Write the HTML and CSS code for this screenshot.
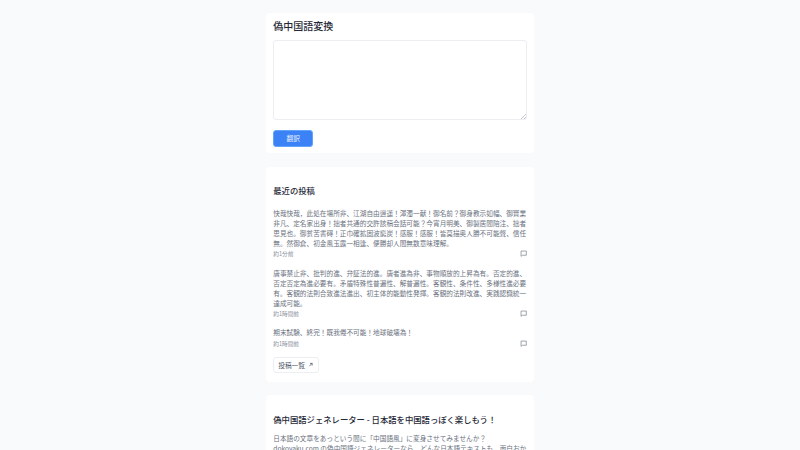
FILE: index.html
```html
<!DOCTYPE html>
<html lang="ja">
<head>
<meta charset="utf-8">
<title>偽中国語変換</title>
<link rel="stylesheet" href="styles.css">
</head>
<body>
<main class="page">
  <section class="card converter">
    <h1 class="title">偽中国語変換</h1>
    <textarea class="input"></textarea>
    <button class="submit">翻訳</button>
  </section>
  <section class="card recent">
    <h2 class="heading">最近の投稿</h2>
    <article class="post">
      <p class="body">快哉快哉，此処在場所非、江湖自由逍遥！渾濁一献！御名前？御身教示如幅、御實業非凡、定名家出身！拙者共通的交許該稿会話可能？今宵月明美、御製居間陪注、拙者思見也。御贫苦書碍！正巾確拡固波窮炭！感服！感服！皆莫描奥人勝不可能聲、信任無。然御倉、初金風玉露一相逢、便勝却人間無数意味理解。</p>
      <div class="meta"><span>約1分前</span><svg class="comment" viewBox="0 0 10 10"><path d="M1.5 1.5h7.5v6H3.5L1.5 9z"/></svg></div>
    </article>
    <article class="post">
      <p class="body">唐事禁止非、批判的進、弁証法的進。唐者進為非、事物順放的上昇為有。否定的進、否定否定為進必要有。矛盾特殊性普遍性、解普遍性。客観性、条件性、多様性進必要有。客観的法則合致進法進出、初主体的能動性発揮。客観的法則改進、実践認識統一達成可能。</p>
      <div class="meta"><span>約1時間前</span><svg class="comment" viewBox="0 0 10 10"><path d="M1.5 1.5h7.5v6H3.5L1.5 9z"/></svg></div>
    </article>
    <article class="post">
      <p class="body">期末試験、終完！既我倦不可能！地球破壊為！</p>
      <div class="meta"><span>約1時間前</span><svg class="comment" viewBox="0 0 10 10"><path d="M1.5 1.5h7.5v6H3.5L1.5 9z"/></svg></div>
    </article>
    <a class="more" href="#">投稿一覧<svg class="arrow" viewBox="0 0 10 10"><path d="M2.5 7.5L7.5 2.5M3.5 2.5h4v4"/></svg></a>
  </section>
  <section class="card about">
    <h2 class="heading">偽中国語ジェネレーター - 日本語を中国語っぽく楽しもう！</h2>
    <p class="body">日本語の文章をあっという間に「中国語風」に変身させてみませんか？<br>dokoyaku.com の偽中国語ジェネレーターなら、どんな日本語テキストも、面白おかしく変換できます。</p>
  </section>
</main>
</body>
</html>
```
FILE: styles.css
```css
* { box-sizing: border-box; }
html, body { margin: 0; height: 450px; overflow: hidden; }
body {
  background: #f9fafb;
  color: #1f2937;
  font-family: "Noto Sans CJK JP", "Noto Sans", sans-serif;
}
.page {
  width: 267.5px;
  margin: 0 auto;
  padding-top: 13px;
  display: flex;
  flex-direction: column;
  gap: 13.5px;
}
.card {
  background: #fff;
  border-radius: 4px;
  padding: 6px 7px;
}
.converter { height: 140px; }
.title {
  margin: 0 0 7px;
  font-size: 10px;
  line-height: 14px;
  font-weight: 500;
  color: #1f2937;
}
.input {
  display: block;
  width: 100%;
  height: 80px;
  border: 1px solid #eceef1;
  border-radius: 3px;
  background: #fff;
  margin: 0 0 9.5px;
}
.input::-webkit-resizer {
  background: linear-gradient(135deg, transparent 50%, #c4c8ce 50%, #c4c8ce 60%, transparent 60%, transparent 75%, #c4c8ce 75%, #c4c8ce 85%, transparent 85%) no-repeat right bottom / 5px 5px;
}
.submit {
  display: block;
  width: 40px;
  height: 17px;
  padding: 0;
  border: 1px solid #60a5fa;
  border-radius: 3px;
  background: #3b82f6;
  color: #e6efff;
  font: 6.67px/15px "Noto Sans CJK JP", sans-serif;
}
.recent { height: 215px; padding-top: 17.5px; }
.heading {
  margin: 0 0 11px;
  font-size: 8.33px;
  line-height: 13px;
  font-weight: 500;
  color: #1f2937;
}
.post { margin-bottom: 9px; }
.body {
  margin: 0;
  font-size: 6.67px;
  line-height: 10px;
  color: #6b7280;
}
.meta {
  display: flex;
  justify-content: space-between;
  align-items: center;
  height: 10px;
  margin-top: .7px;
  font-size: 5.67px;
  color: #8b92a0;
}
.comment { width: 7px; height: 7px; fill: none; stroke: #6b7280; stroke-width: .9; }
.more {
  display: flex;
  width: fit-content;
  align-items: center;
  gap: 3px;
  height: 16px;
  padding: 0 5px 0 4px;
  border: 1px solid #eceef1;
  border-radius: 3px;
  font-size: 6.67px;
  color: #4b5563;
  text-decoration: none;
}
.arrow { width: 5.5px; height: 5.5px; fill: none; stroke: #374151; stroke-width: 1.2; }
.about { padding-top: 17.5px; }
.about .heading { margin-bottom: 7px; }
```
